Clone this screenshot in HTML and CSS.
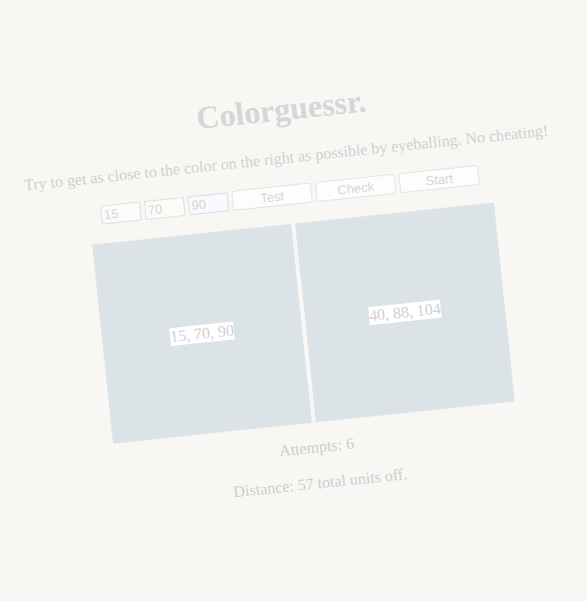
FILE: index.html
```html
<!DOCTYPE html>
<html>
<head>
<meta charset="utf-8">
<title>Colorguessr.</title>
<link rel="stylesheet" href="styles.css">
</head>
<body>
<div class="page">
  <h1 class="title">Colorguessr.</h1>
  <p class="subtitle">Try to get as close to the color on the right as possible by eyeballing. No cheating!</p>
  <div class="controls">
    <input class="num num-r" type="text" value="15">
    <input class="num num-g" type="text" value="70">
    <input class="num num-b" type="text" value="90">
    <button class="btn">Test</button>
    <button class="btn">Check</button>
    <button class="btn">Start</button>
  </div>
  <div class="swatches">
    <div class="swatch"><span class="swatch-label">15, 70, 90</span></div>
    <div class="swatch"><span class="swatch-label">40, 88, 104</span></div>
  </div>
  <p class="stat stat-attempts">Attempts: 6</p>
  <p class="stat stat-distance">Distance: 57 total units off.</p>
</div>
</body>
</html>
```

FILE: styles.css
```css
html, body {
  margin: 0;
  padding: 0;
  width: 100%;
  height: 100%;
  overflow: hidden;
  background: #f8f7f4;
}

.page {
  width: 587px;
  height: 601px;
  box-sizing: border-box;
  padding: 91px 0 0 15px;
  display: flex;
  flex-direction: column;
  align-items: center;
  font-family: "Liberation Serif", "Times New Roman", serif;
  transform: rotate(-6deg);
  transform-origin: 293.5px 300px;
}

.title {
  margin: 0;
  font-size: 32px;
  line-height: 37px;
  font-weight: bold;
  color: #d5d6d7;
}

.subtitle {
  margin: 21px 0 0;
  font-size: 16px;
  line-height: 18px;
  color: #d0d0d0;
  white-space: nowrap;
}

.controls {
  margin-top: 18px;
  display: flex;
  gap: 4px;
  align-items: center;
  height: 20px;
}

.num {
  width: 40px;
  height: 19px;
  box-sizing: border-box;
  margin: 0;
  padding: 1px 2px;
  border: 1px solid #dedede;
  font-family: "Liberation Sans", Arial, sans-serif;
  font-size: 13px;
  line-height: 15px;
  color: #d6d6d6;
  outline: none;
}
.num-r { background: #fdfafa; }
.num-g { background: #f9fdf9; }
.num-b { background: #f9f9fe; }

.btn {
  width: 80px;
  height: 20px;
  box-sizing: border-box;
  margin: 0;
  padding: 0;
  border: 1px solid #e3e3e3;
  border-radius: 3px;
  background: #fdfdfd;
  font-family: "Liberation Sans", Arial, sans-serif;
  font-size: 13px;
  color: #d6d6d6;
}

.swatches {
  margin-top: 19px;
  display: flex;
  gap: 4px;
}

.swatch {
  width: 200px;
  height: 200px;
  background: #dce3e6;
  display: flex;
  align-items: center;
  justify-content: center;
}

.swatch-label {
  background: #ffffff;
  font-size: 16px;
  line-height: 18px;
  color: #d0d0d0;
}

.stat {
  margin: 0;
  font-size: 16px;
  line-height: 18px;
  color: #cdcdcd;
}
.stat-attempts { margin-top: 16px; }
.stat-distance { margin-top: 18px; }
```
